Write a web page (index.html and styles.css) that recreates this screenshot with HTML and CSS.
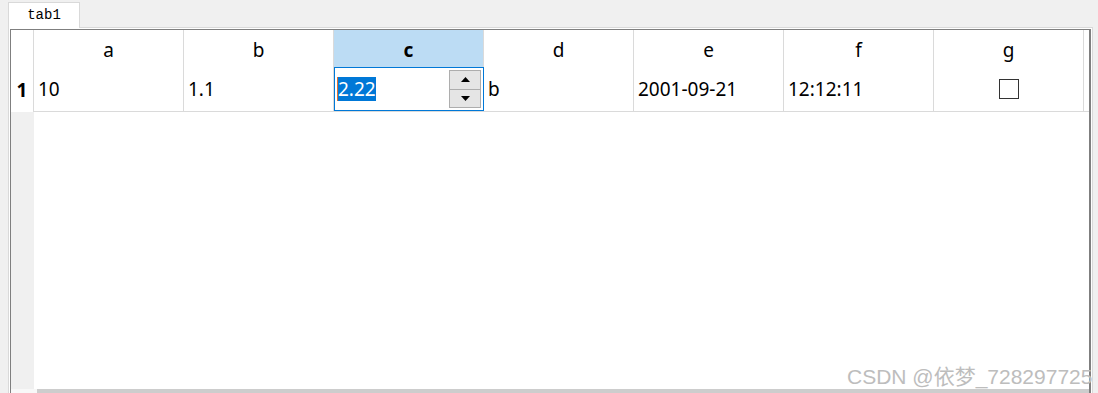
FILE: index.html
```html
<!DOCTYPE html>
<html lang="zh">

<head>
    <meta charset="UTF-8">
    <meta name="viewport" content="width=device-width, initial-scale=1.0">
    <title>tab1</title>
    <link rel="stylesheet" href="styles.css">
</head>

<body>
    <div class="tabs">
        <div class="tab">tab1</div>
    </div>
    <div class="pane">
        <div class="frame">
            <div class="grid">
                <div class="corner"></div>
                <div class="hcell">a</div>
                <div class="hcell">b</div>
                <div class="hcell current">c</div>
                <div class="hcell">d</div>
                <div class="hcell">e</div>
                <div class="hcell">f</div>
                <div class="hcell">g</div>
                <div class="hfill"></div>

                <div class="vcell">1</div>
                <div class="cell">10</div>
                <div class="cell">1.1</div>
                <div class="cell editing">
                    <div class="spin">
                        <div class="spin-text"><span class="sel">2.22</span></div>
                        <div class="spin-btns">
                            <div class="spin-btn">
                                <svg width="9" height="5" viewBox="0 0 9 5"><path d="M4.5 0 L9 5 L0 5 Z" fill="#000"/></svg>
                            </div>
                            <div class="spin-btn">
                                <svg width="9" height="5" viewBox="0 0 9 5"><path d="M0 0 L9 0 L4.5 5 Z" fill="#000"/></svg>
                            </div>
                        </div>
                    </div>
                </div>
                <div class="cell">b</div>
                <div class="cell">2001-09-21</div>
                <div class="cell">12:12:11</div>
                <div class="cell center"><span class="check"></span></div>
                <div class="cell fill"></div>
            </div>
            <div class="empty">
                <div class="vempty"></div>
            </div>
            <div class="hscroll">
                <div class="hscroll-btn"></div>
                <div class="hscroll-thumb"></div>
            </div>
        </div>
    </div>
    <div class="watermark">CSDN @依梦_728297725</div>
</body>

</html>
```

FILE: styles.css
```css
* {
    margin: 0;
    padding: 0;
    box-sizing: border-box;
}

body {
    background-color: #f0f0f0;
    font-family: "Noto Sans", "Noto Sans CJK SC", sans-serif;
    font-size: 19px;
    color: #000;
    overflow: hidden;
    height: 393px;
}

.tabs {
    display: flex;
    padding: 2px 0 0 8px;
}

.tab {
    width: 72px;
    height: 26px;
    margin-bottom: -1px;
    border: 1px solid #d9d9d9;
    border-bottom: none;
    background-color: #fff;
    font-family: "Liberation Mono", monospace;
    font-size: 14px;
    display: flex;
    justify-content: center;
    align-items: center;
    padding-bottom: 1px;
    position: relative;
    z-index: 1;
}

.pane {
    margin-left: 8px;
    width: 1085px;
    height: 384px;
    border: 1px solid #d9d9d9;
    background-color: #fff;
    padding: 1px;
}

.frame {
    height: 100%;
    border: 1px solid #7f7f7f;
    border-right: 2px solid #7f7f7f;
    display: flex;
    flex-direction: column;
    background-color: #fff;
}

.grid {
    display: grid;
    grid-template-columns: 23px repeat(7, 150px) 1fr;
    grid-template-rows: 37px 45px;
}

.corner,
.hcell,
.vcell,
.cell {
    border-right: 1px solid #dadada;
}

.hcell {
    display: flex;
    justify-content: center;
    align-items: center;
    padding-top: 2px;
}

.hcell.current {
    background-color: #bcdcf4;
    font-weight: bold;
}

.vcell {
    font-weight: bold;
    display: flex;
    justify-content: center;
    align-items: center;
}

.cell {
    border-bottom: 1px solid #dadada;
    display: flex;
    align-items: center;
    padding-left: 4px;
    white-space: nowrap;
}

.cell.fill {
    border-right: none;
}

.cell.center {
    justify-content: center;
    padding-left: 0;
}

.cell.editing {
    padding-left: 0;
    border-right: none;
    align-items: stretch;
}

.spin {
    width: 150px;
    height: 44px;
    border: 1px solid #0078d7;
    padding: 1px;
    display: flex;
}

.spin-text {
    flex: 1;
    display: flex;
    align-items: center;
    padding-left: 1px;
}

.sel {
    background-color: #0078d7;
    color: #fff;
    line-height: 24px;
    height: 24px;
    display: inline-block;
    border-left: 1px solid #e07030;
}

.spin-btns {
    width: 32px;
    margin: 1px 1px 1px 0;
    display: flex;
    flex-direction: column;
}

.spin-btn {
    flex: 1;
    background-color: #e5e5e5;
    border: 1px solid #adadad;
    display: flex;
    justify-content: center;
    align-items: center;
}

.spin-btn + .spin-btn {
    border-top: none;
}

.check {
    width: 20px;
    height: 20px;
    border: 1px solid #333;
    background-color: #fff;
}

.empty {
    height: 277px;
    display: flex;
}

.vempty {
    width: 23px;
    background-color: #f0f0f0;
}

.hscroll {
    height: 17px;
    display: flex;
    background-color: #f0f0f0;
}

.hscroll-btn {
    width: 26px;
    background-color: #f8f8f8;
}

.hscroll-thumb {
    flex: 1;
    background-color: #cdcdcd;
}

.watermark {
    position: absolute;
    left: 847px;
    top: 360px;
    font-family: "Liberation Sans", "Noto Sans CJK SC", sans-serif;
    font-size: 21px;
    color: #bdbdbd;
    white-space: nowrap;
}
```
